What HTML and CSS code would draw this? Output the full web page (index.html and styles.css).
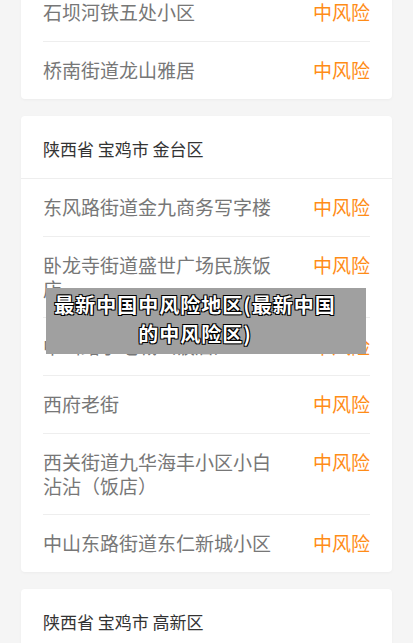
FILE: index.html
```html
<!DOCTYPE html>
<html lang="zh-CN">
<head>
    <meta charset="UTF-8">
    <meta name="viewport" content="width=device-width, initial-scale=1.0">
    <title>最新中国中风险地区</title>
    <link rel="stylesheet" href="styles.css">
</head>
<body>
    <div class="list">
        <div class="card first">
            <div class="rows">
                <div class="row"><span class="name">石坝河铁五处小区</span><span class="risk">中风险</span></div>
                <div class="row"><span class="name">桥南街道龙山雅居</span><span class="risk">中风险</span></div>
            </div>
        </div>
        <div class="card">
            <div class="card-head">陕西省 宝鸡市 金台区</div>
            <div class="rows">
                <div class="row"><span class="name">东风路街道金九商务写字楼</span><span class="risk">中风险</span></div>
                <div class="row"><span class="name">卧龙寺街道盛世广场民族饭店</span><span class="risk">中风险</span></div>
                <div class="row"><span class="name">中山路小吃城（饭店）</span><span class="risk">中风险</span></div>
                <div class="row"><span class="name">西府老街</span><span class="risk">中风险</span></div>
                <div class="row"><span class="name">西关街道九华海丰小区小白沾沾（饭店）</span><span class="risk">中风险</span></div>
                <div class="row"><span class="name">中山东路街道东仁新城小区</span><span class="risk">中风险</span></div>
            </div>
        </div>
        <div class="card">
            <div class="card-head">陕西省 宝鸡市 高新区</div>
            <div class="rows">
                <div class="row"><span class="name">高新大道</span><span class="risk">中风险</span></div>
            </div>
        </div>
    </div>
    <div class="banner">最新中国中风险地区(最新中国的中风险区)</div>
</body>
</html>
```

FILE: styles.css
```css
body{
    margin: 0;
    padding: 0;
    background-color: #f5f5f5;
    font-family: "Noto Sans CJK SC", "Noto Sans", sans-serif;
}
.list{
    display: flex;
    flex-direction: column;
    gap: 17px;
    padding: 0 21px 20px;
}
.card{
    background-color: white;
    border-radius: 4px;
    box-shadow: 0 1px 3px rgba(0,0,0,.04);
}
.card.first{
    margin-top: -16px;
    border-radius: 0 0 4px 4px;
}
.card-head{
    padding: 21px 22px 17px;
    font-size: 17px;
    line-height: 24px;
    color: #333;
    border-bottom: 1px solid #eee;
}
.rows{
    padding: 0 22px;
}
.row{
    display: flex;
    justify-content: space-between;
    align-items: flex-start;
    padding: 16px 0 17px;
    font-size: 19px;
    line-height: 24px;
    border-bottom: 1px solid #eee;
}
.row:last-child{
    border-bottom: none;
}
.name{
    width: 230px;
    line-height: 23.5px;
    color: #777;
}
.risk{
    color: #ff8c17;
}
.banner{
    position: fixed;
    top: 288px;
    left: 46px;
    width: 320px;
    height: 66px;
    box-sizing: border-box;
    padding: 2px 26px 4px 4px;
    background-color: #a0a0a0;
    color: white;
    font-size: 20px;
    font-weight: bold;
    line-height: 29px;
    letter-spacing: 1px;
    text-align: center;
    text-shadow: 1px 1px 0 #000, -1px -1px 0 #000, 1px -1px 0 #000, -1px 1px 0 #000;
}
```
